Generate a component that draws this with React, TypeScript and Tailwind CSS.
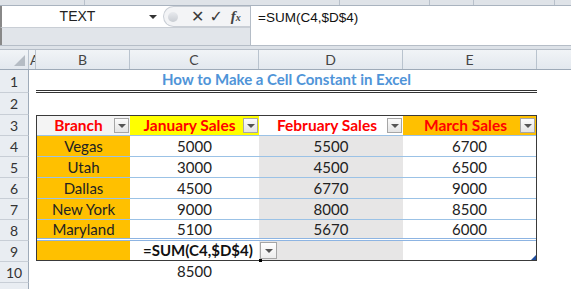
import React from 'react';

const font = { fontFamily: 'Lato, "Open Sans", sans-serif' };

const FilterButton = ({ className = '' }: { className?: string }) => (
  <div
    className={`flex h-[15px] w-[15px] items-center justify-center border border-[#a6a6a6] bg-gradient-to-b from-[#fbfbfb] to-[#e4e4e4] ${className}`}
  >
    <div className="h-0 w-0 border-x-[4px] border-t-[4px] border-x-transparent border-t-[#555]" />
  </div>
);

const RowHead = ({ n, h }: { n: string; h: string }) => (
  <div className={`flex ${h} w-[29px] shrink-0 items-center justify-center border-b border-r border-b-[#c8ced6] border-r-[#9eaab8] bg-[#e9edf2] text-[14px] text-[#333]`}>
    {n}
  </div>
);

const branches = [
  ['Vegas', '5000', '5500', '6700'],
  ['Utah', '3000', '4500', '6500'],
  ['Dallas', '4500', '6770', '9000'],
  ['New York', '9000', '8000', '8500'],
  ['Maryland', '5100', '5670', '6000'],
];

const App = () => {
  return (
    <div className="h-[289px] w-[571px] overflow-hidden bg-white" style={font}>
      {/* ribbon bottom strip */}
      <div className="flex h-[5px] bg-[#dfe3e8]">
        <div className="w-[85px] border-r border-[#b9c1cb]" />
        <div className="w-[255px] border-r border-[#b9c1cb]" />
        <div className="w-[90px] border-r border-[#b9c1cb]" />
        <div className="w-[44px] border-r border-[#b9c1cb]" />
        <div className="w-[81px] border-r border-[#b9c1cb]" />
      </div>

      {/* formula bar */}
      <div className="flex h-[40px] border-t border-[#a9b3bf]">
        <div className="flex w-[250px] flex-col">
          <div className="flex h-[21px] items-center bg-white">
            <div className="flex w-[163px] items-center border-l-2 border-[#888]">
              <span className="flex-1 pl-[4px] text-center text-[14px] text-[#222]" style={{ fontFamily: '"Liberation Sans", sans-serif' }}>
                TEXT
              </span>
              <div className="mr-[6px] h-0 w-0 border-x-[4px] border-t-[4px] border-x-transparent border-t-[#333]" />
            </div>
            <div className="flex h-[21px] flex-1 items-center rounded-l-full border-y border-l border-[#c9ced5] bg-[#f3f4f6]">
              <div className="ml-[4px] h-[10px] w-[10px] rounded-full bg-gradient-to-b from-[#e8eaee] to-[#c9cdd3]" />
              <span className="ml-[13px] text-[16px] font-bold leading-none text-[#3a3a3a]" style={{ fontFamily: '"DejaVu Sans", sans-serif' }}>
                ✕
              </span>
              <span className="ml-[5px] text-[16px] font-bold leading-none text-[#3a3a3a]" style={{ fontFamily: '"DejaVu Sans", sans-serif' }}>
                ✓
              </span>
              <span className="ml-[8px] text-[15px] font-bold italic leading-none text-[#444]" style={{ fontFamily: '"Liberation Serif", serif' }}>
                f<span className="text-[10px]">x</span>
              </span>
            </div>
          </div>
          <div className="flex-1 border-l-2 border-t border-l-[#888] border-t-[#c9ced5] bg-[#e1e5ea]" />
        </div>
        <div className="flex-1 border-l border-[#b4bcc6] bg-white pl-[7px] pt-[2px] text-[13.5px] text-[#111]" style={{ fontFamily: '"Liberation Sans", sans-serif' }}>
          =SUM(C4,$D$4)
        </div>
      </div>

      <div className="h-[5px] border-y border-[#b5bdc7] bg-[#dde2e8]" />

      {/* column headers */}
      <div className="flex h-[20px] border-b border-[#9eaab8] bg-gradient-to-b from-[#f1f4f7] to-[#e3e8ee] text-[14px] text-[#444]">
        <div className="relative w-[29px] border-r border-[#b9c3ce]">
          <div className="absolute bottom-[3px] right-[3px] h-0 w-0 border-b-[11px] border-l-[11px] border-b-[#b5bcc4] border-l-transparent" />
        </div>
        <div className="w-[7px] overflow-hidden border-r border-[#b9c3ce] pl-[1px] leading-[19px]">A</div>
        <div className="flex w-[94px] items-center justify-center border-r border-[#b9c3ce]">B</div>
        <div className="flex w-[129px] items-center justify-center border-r border-[#b9c3ce]">C</div>
        <div className="flex w-[144px] items-center justify-center border-r border-[#b9c3ce]">D</div>
        <div className="flex w-[134px] items-center justify-center border-r border-[#b9c3ce]">E</div>
        <div className="flex-1" />
      </div>

      <div className="flex">
        {/* row headers */}
        <div className="flex flex-col">
          <RowHead n="1" h="h-[23px]" />
          <RowHead n="2" h="h-[22px]" />
          <RowHead n="3" h="h-[21px]" />
          <RowHead n="4" h="h-[21px]" />
          <RowHead n="5" h="h-[21px]" />
          <RowHead n="6" h="h-[21px]" />
          <RowHead n="7" h="h-[21px]" />
          <RowHead n="8" h="h-[21px]" />
          <RowHead n="9" h="h-[21px]" />
          <RowHead n="10" h="h-[21px]" />
          <RowHead n="" h="h-[21px]" />
        </div>

        {/* sheet body */}
        <div className="flex flex-1 flex-col text-[15px] text-[#222]">
          {/* row 1: title */}
          <div className="flex h-[23px]">
            <div className="w-[7px]" />
            <div className="flex w-[501px] items-center justify-center border-b-[3px] border-double border-[#333] pb-[1px] text-[15px] font-bold text-[#4f94d8]">
              How to Make a Cell Constant in Excel
            </div>
          </div>
          {/* row 2 */}
          <div className="h-[22px]" />

          {/* table rows 3-9 */}
          <div className="ml-[7px] w-[501px] border border-[#3a3a3a]">
            <div className="flex h-[20px] border-b border-[#9bc2e6] text-[15.5px] font-bold text-[#ff0000]">
              <div className="flex w-[93px] items-center justify-end bg-[#f4f4f4] pr-[1px]">
                <span className="flex-1 pl-[6px] text-center">Branch</span>
                <FilterButton />
              </div>
              <div className="flex w-[129px] items-center bg-[#ffff00] pr-[1px]">
                <span className="flex-1 pl-[6px] text-center">January Sales</span>
                <FilterButton />
              </div>
              <div className="flex w-[144px] items-center bg-white pr-[1px]">
                <span className="flex-1 pl-[8px] text-center">February Sales</span>
                <FilterButton />
              </div>
              <div className="flex flex-1 items-center bg-[#ffc000] pr-[1px]">
                <span className="flex-1 pl-[8px] text-center">March Sales</span>
                <FilterButton />
              </div>
            </div>

            {branches.map((r, i) => (
              <div
                key={r[0]}
                className={`flex h-[21px] ${i === branches.length - 1 ? 'border-b-[3px] border-double border-[#8db4e2]' : 'border-b border-[#9bc2e6]'}`}
              >
                <div className="flex w-[93px] items-center justify-center bg-[#ffc000]">{r[0]}</div>
                <div className="flex w-[129px] items-center justify-center bg-white">{r[1]}</div>
                <div className="flex w-[144px] items-center justify-center bg-[#e7e6e6]">{r[2]}</div>
                <div className="flex flex-1 items-center justify-center bg-white">{r[3]}</div>
              </div>
            ))}

            <div className="relative flex h-[19px]">
              <div className="w-[93px] bg-[#ffc000]" />
              <div className="flex w-[129px] items-center whitespace-nowrap bg-white pl-[13px] font-bold text-[#111]">
                =SUM(C4,$D$4)
              </div>
              <div className="relative flex w-[144px] items-center bg-[#e7e6e6] pl-[1px]">
                <FilterButton className="h-[17px] w-[17px] from-white to-[#ededed]" />
                <div className="absolute -bottom-[2px] left-0 h-[3px] w-[3px] bg-black" />
              </div>
              <div className="flex-1 bg-white" />
              <div className="absolute bottom-0 right-0 h-0 w-0 border-b-[5px] border-l-[5px] border-b-[#1f4e9e] border-l-transparent" />
            </div>
          </div>

          {/* row 10 */}
          <div className="flex h-[21px]">
            <div className="w-[101px]" />
            <div className="flex w-[129px] items-center justify-center">8500</div>
          </div>
        </div>
      </div>
    </div>
  );
};

export default App;
